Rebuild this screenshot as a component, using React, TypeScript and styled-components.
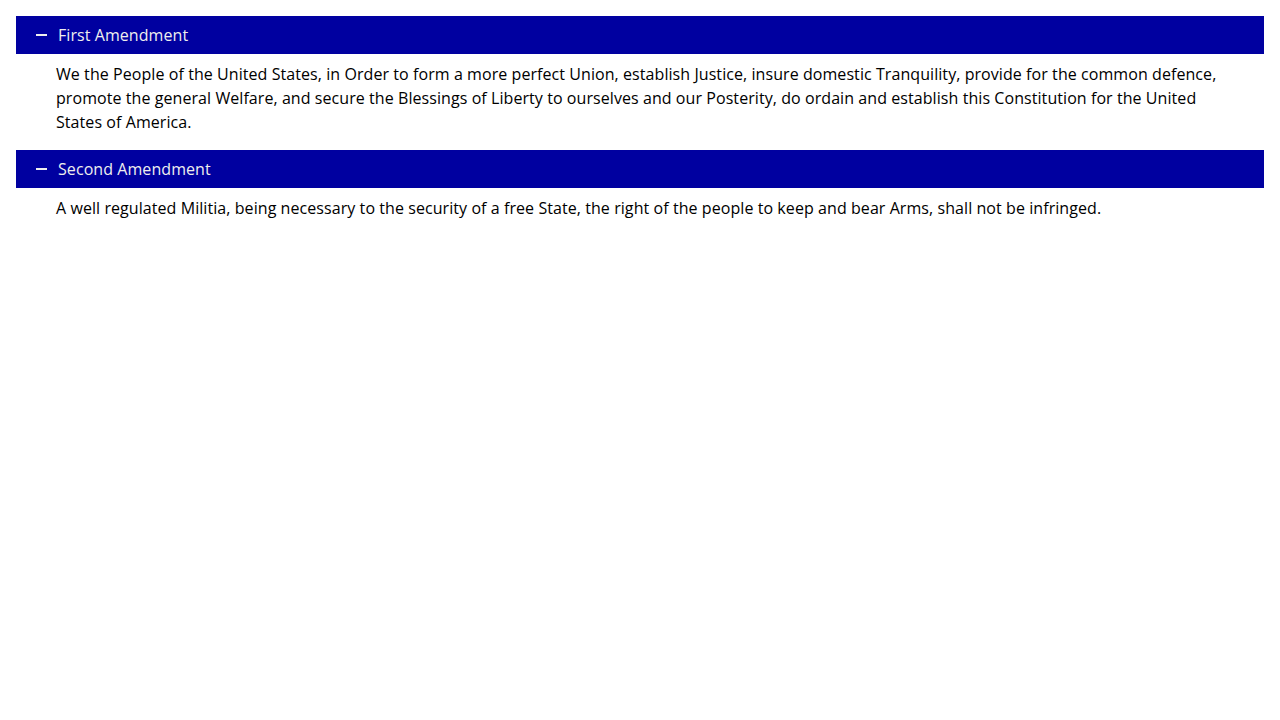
import React, { useState } from 'react'
import styled, { createGlobalStyle } from 'styled-components'

const GlobalStyle = createGlobalStyle`
	body {
		margin: 0;
		background: #fff;
		font-family: "Open Sans", "Liberation Sans", sans-serif;
		font-size: 16px;
		letter-spacing: 0.07px;
		color: #000;
	}
`

const Page = styled.div`
	padding: 16px;
`

const Header = styled.button`
	display: flex;
	align-items: center;
	width: 100%;
	height: 38px;
	border: 0;
	padding: 0 0 0 20px;
	background-color: #0000a0;
	color: #eeeeee;
	font-family: inherit;
	font-size: 16px;
	letter-spacing: inherit;
	text-align: left;
	cursor: pointer;
`

const Sign = styled.span`
	display: inline-block;
	position: relative;
	width: 11px;
	height: 2px;
	margin-right: 11px;
	background: #eeeeee;
`

const SignBar = styled.span`
	position: absolute;
	left: 4.5px;
	top: -4.5px;
	width: 2px;
	height: 11px;
	background: #eeeeee;
`

const Content = styled.div`
	padding: 8px 40px 16px 40px;
	line-height: 24px;
`

const Section = ({ title, children }: { title: string; children: React.ReactNode }) => {
	const [open, setOpen] = useState(true)
	return (
		<div>
			<Header onClick={() => setOpen(!open)} aria-expanded={open}>
				<Sign>{!open && <SignBar />}</Sign>
				{title}
			</Header>
			{open && <Content>{children}</Content>}
		</div>
	)
}

export default function App() {
	return (
		<>
			<GlobalStyle />
			<Page>
				<Section title="First Amendment">
					We the People of the United States, in Order to form a more perfect Union, establish Justice,
					insure domestic Tranquility, provide for the common defence, promote the general Welfare, and
					secure the Blessings of Liberty to ourselves and our Posterity, do ordain and establish this
					Constitution for the United States of America.
				</Section>
				<Section title="Second Amendment">
					A well regulated Militia, being necessary to the security of a free State, the right of the people
					to keep and bear Arms, shall not be infringed.
				</Section>
			</Page>
		</>
	)
}
